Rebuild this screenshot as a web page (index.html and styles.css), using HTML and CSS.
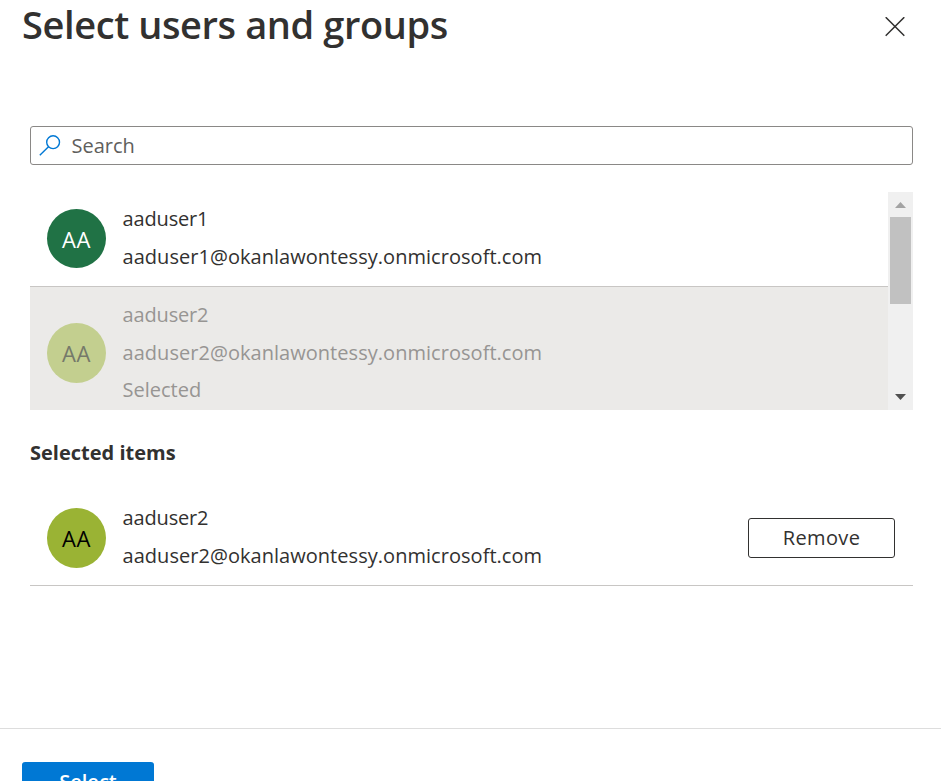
FILE: index.html
```html
<!DOCTYPE html>
<html lang="en">
<head>
<meta charset="utf-8">
<title>Select users and groups</title>
<link rel="stylesheet" href="styles.css">
</head>
<body>
<div class="panel">
  <header class="header">
    <h1 class="title">Select users and groups</h1>
    <button class="close" aria-label="Close">
      <svg width="20" height="20" viewBox="0 0 20 20"><path d="M.7.2 19.3 18.8M19.3.2.7 18.8" fill="none" stroke="#323130" stroke-width="1.5"/></svg>
    </button>
  </header>
  <main class="content">
    <div class="search">
      <svg class="search-icon" width="22" height="22" viewBox="0 0 22 22" fill="none" stroke="#0078d4" stroke-width="1.4"><circle cx="14.1" cy="7.2" r="6.4"/><path d="M9.5 11.800.8 20.3"/></svg>
      <span class="search-text">Search</span>
    </div>
    <div class="list">
      <div class="rows">
        <div class="row">
          <div class="avatar green"><span class="initials">AA</span></div>
          <div class="details">
            <div class="line"><span class="name">aaduser1</span></div>
            <div class="line"><span class="email">aaduser1@okanlawontessy.onmicrosoft.com</span></div>
          </div>
        </div>
        <div class="row disabled">
          <div class="avatar pale"><span class="initials">AA</span></div>
          <div class="details">
            <div class="line"><span class="name">aaduser2</span></div>
            <div class="line"><span class="email">aaduser2@okanlawontessy.onmicrosoft.com</span></div>
            <div class="line state"><span class="status">Selected</span></div>
          </div>
        </div>
      </div>
      <div class="scrollbar">
        <svg class="arrow" width="11" height="6" viewBox="0 0 11 6"><path d="M0 6 5.5 0 11 6z" fill="#a3a3a3"/></svg>
        <div class="thumb"></div>
        <svg class="arrow down" width="11" height="6" viewBox="0 0 11 6"><path d="M0 0h11L5.5 6z" fill="#505050"/></svg>
      </div>
    </div>
    <h2 class="subtitle"><span class="subtitle-text">Selected items</span></h2>
    <div class="row chosen">
      <div class="avatar lime"><span class="initials">AA</span></div>
      <div class="details">
        <div class="line"><span class="name">aaduser2</span></div>
        <div class="line"><span class="email">aaduser2@okanlawontessy.onmicrosoft.com</span></div>
      </div>
      <button class="remove"><span class="remove-text">Remove</span></button>
    </div>
  </main>
  <footer class="footer">
    <button class="select"><span class="select-text">Select</span></button>
  </footer>
</div>
</body>
</html>
```
FILE: styles.css
```css
* { box-sizing: border-box; }
body {
  margin: 0;
  height: 781px;
  overflow: hidden;
  background: #fff;
  color: #323130;
  font: 20px/38px "Open Sans", "Noto Sans", sans-serif;
}
button { font: inherit; color: inherit; padding: 0; cursor: pointer; }
.panel { display: flex; flex-direction: column; height: 781px; overflow: hidden; }
.header {
  display: flex;
  flex: none;
  justify-content: space-between;
  height: 126px;
  padding: 0 36px 0 22px;
}
.title {
  margin: 0;
  font-size: 38px;
  font-weight: 600;
  line-height: 49px;
  letter-spacing: -0.4px;
  white-space: nowrap;
}
.close { width: 20px; height: 20px; margin-top: 17px; border: 0; background: none; }
.close svg { display: block; }
.content { flex: none; height: 602px; padding: 0 28px 0 30px; }
.search {
  display: flex;
  align-items: center;
  height: 39px;
  padding-left: 8px;
  border: 1px solid #8a8886;
  border-radius: 3px;
  color: #605e5c;
}
.search-icon { margin-right: 10.5px; }
.list { display: flex; height: 218px; margin-top: 27px; overflow: hidden; }
.rows { flex: 1; }
.row { display: flex; height: 95px; padding: 8px 17px 0; border-bottom: 1px solid #c8c6c4; }
.avatar {
  flex: none;
  width: 59px;
  height: 59px;
  margin: 9px 16.5px 0 0;
  border-radius: 50%;
  line-height: 60px;
  text-align: center;
}
.green { background: #207245; color: #fff; }
.lime { height: 60px; background: #9ab334; color: #000; }
.pale { height: 60px; background: #c3cf8f; color: #75796a; }
.initials { font-size: 22px; letter-spacing: 0.6px; }
.details { flex: 1; white-space: nowrap; }
.line { height: 38px; }
.email { letter-spacing: 0.04px; }
.name { letter-spacing: -0.15px; }
.state { line-height: 36px; }
.disabled { height: 132px; padding-top: 9px; background: #ebeae8; color: #979593; }
.disabled .avatar { margin-top: 27px; }
.scrollbar {
  display: flex;
  flex-direction: column;
  align-items: center;
  width: 25px;
  background: #f0f0f0;
}
.arrow { display: block; margin-top: 10px; }
.thumb { width: 21px; height: 87px; margin-top: 9px; background: #c1c1c1; }
.down { margin: auto 0 10px; }
.subtitle { margin: 24px 0 0; font-size: 20px; font-weight: 700; line-height: 38px; white-space: nowrap; }
.chosen { height: 95px; margin-top: 19px; padding-right: 18px; }
.remove {
  width: 147px;
  height: 40px;
  margin-top: 19px;
  border: 1px solid #323130;
  border-radius: 3px;
  background: #fff;
  font-weight: 500;
  line-height: 38px;
  letter-spacing: 0.35px;
}
.footer { flex: none; height: 110px; padding: 33px 22px 0; border-top: 1px solid #dddddd; }
.select {
  display: block;
  width: 132px;
  height: 40px;
  border: 0;
  border-radius: 3px;
  background: #0078d4;
  color: #fff;
  font-weight: 600;
  line-height: 40px;
}
```
